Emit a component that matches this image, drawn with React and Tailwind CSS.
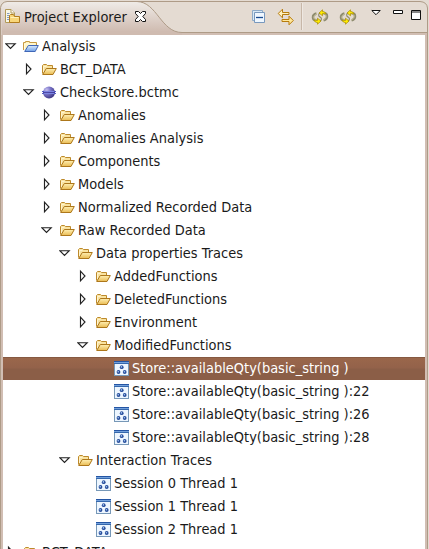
import React from "react";

const OpenFolder = () => (
  <svg width="16" height="16" viewBox="0 0 16 16">
    <defs>
      <linearGradient id="gold" x1="0" y1="0" x2="0" y2="1">
        <stop offset="0" stopColor="#fff0b4" />
        <stop offset="1" stopColor="#e9bb52" />
      </linearGradient>
    </defs>
    <path d="M1.5 12.5V4.5L2.5 3.5H5.5L6.5 4.5H11.5V7" fill="#f9e3a0" stroke="#bd8a2c" />
    <path d="M1.7 13.5L5.3 7.5H15.3L12 13.5Z" fill="url(#gold)" stroke="#ad771b" />
    <path d="M2.5 11V5.5H5.5" fill="none" stroke="#fff3cc" />
  </svg>
);

const ProjectFolder = () => (
  <svg width="16" height="16" viewBox="0 0 16 16">
    <defs>
      <linearGradient id="blue" x1="0" y1="0" x2="0" y2="1">
        <stop offset="0" stopColor="#dcecff" />
        <stop offset="1" stopColor="#6fa0e6" />
      </linearGradient>
    </defs>
    <path d="M.5 12V4.5H2.5V3.5H6.5V4.5H13.5V7" fill="#fff3bd" stroke="#c79a43" />
    <path d="M1.5 11V6H12" fill="none" stroke="#fffbe2" />
    <path d="M1.7 13.5L5.3 7.5H15.3L12.2 13.5Z" fill="url(#blue)" stroke="#3f66b7" />
  </svg>
);

const Sphere = () => (
  <svg width="16" height="16" viewBox="0 0 16 16">
    <defs>
      <radialGradient id="orb" cx=".3" cy=".28" r=".8">
        <stop offset="0" stopColor="#c4bff0" />
        <stop offset=".45" stopColor="#7670c4" />
        <stop offset="1" stopColor="#3a3380" />
      </radialGradient>
    </defs>
    <circle cx="8" cy="8.5" r="6" fill="url(#orb)" />
    <path d="M1 7.5H15M1 9.5H15" stroke="#5058c0" />
    <path d="M3 7.5H13M3 9.5H13" stroke="#8e9af0" strokeWidth=".7" />
    <path d="M2 8.5H14" stroke="#40389a" strokeWidth=".8" />
  </svg>
);

const Trace = () => (
  <svg width="16" height="16" viewBox="0 0 16 16">
    <rect x="1.5" y="1.5" width="14" height="14" fill="#edf6ff" stroke="#7798b7" />
    <path d="M1 1.5H16" stroke="#2455a4" />
    <path d="M1 2.5H16" stroke="#72a0db" />
    <path d="M1 3.5H16" stroke="#3567ac" />
    <g fill="#264c9b">
      <circle cx="8.7" cy="7.2" r="1.9" />
      <circle cx="5.5" cy="12" r="1.9" />
      <circle cx="11.7" cy="12" r="1.9" />
    </g>
    <g fill="#a5c8f2">
      <circle cx="8.4" cy="6.9" r=".8" />
      <circle cx="5.2" cy="11.7" r=".8" />
      <circle cx="11.4" cy="11.7" r=".8" />
    </g>
  </svg>
);

const Arrow = ({ state }) => (
  <svg width="12" height="14" viewBox="0 0 12 14" className="shrink-0">
    {state === "open" && <path d="M.8 4.7H10.2L5.5 9.4Z" fill="#fff" stroke="#222" strokeWidth="1.15" />}
    {state === "closed" && <path d="M3.5 2.2V11.8L8 7Z" fill="#fff" stroke="#222" strokeWidth="1.15" />}
  </svg>
);

const icons = { folder: OpenFolder, project: ProjectFolder, sphere: Sphere, trace: Trace };
const indents = ["pl-[2px]", "pl-[20px]", "pl-[38px]", "pl-[56px]", "pl-[74px]", "pl-[92px]"];

const rows = [
  [0, "open", "project", "Analysis"],
  [1, "closed", "folder", "BCT_DATA"],
  [1, "open", "sphere", "CheckStore.bctmc"],
  [2, "closed", "folder", "Anomalies"],
  [2, "closed", "folder", "Anomalies Analysis"],
  [2, "closed", "folder", "Components"],
  [2, "closed", "folder", "Models"],
  [2, "closed", "folder", "Normalized Recorded Data"],
  [2, "open", "folder", "Raw Recorded Data"],
  [3, "open", "folder", "Data properties Traces"],
  [4, "closed", "folder", "AddedFunctions"],
  [4, "closed", "folder", "DeletedFunctions"],
  [4, "closed", "folder", "Environment"],
  [4, "open", "folder", "ModifiedFunctions"],
  [5, "none", "trace", "Store::availableQty(basic_string )", true],
  [5, "none", "trace", "Store::availableQty(basic_string ):22"],
  [5, "none", "trace", "Store::availableQty(basic_string ):26"],
  [5, "none", "trace", "Store::availableQty(basic_string ):28"],
  [3, "open", "folder", "Interaction Traces"],
  [4, "none", "trace", "Session 0 Thread 1"],
  [4, "none", "trace", "Session 1 Thread 1"],
  [4, "none", "trace", "Session 2 Thread 1"],
  [0, "closed", "folder", "BCT_DATA"],
];

const Row = ({ row: [depth, state, icon, label, selected] }) => {
  const Icon = icons[icon];
  return (
    <div
      className={`flex h-[23px] shrink-0 items-center pb-px ${indents[depth]} ${
        selected
          ? "bg-[linear-gradient(#865941_0px,#865941_1px,#9a674b_1px,#93624a_11px,#8b5e47_12px,#8b5e47_100%)] text-white"
          : "text-[#1a1a1a]"
      }`}
    >
      <Arrow state={state} />
      <span className="ml-[6px] mr-[3px] shrink-0"><Icon /></span>
      <span className="origin-[0_17px] scale-y-[1.06] whitespace-pre pt-[2px]">{label}</span>
    </div>
  );
};

const Sync = () => (
  <svg width="18" height="18" viewBox="0 0 18 18">
    <path d="M5.5 12.5C1 12 .5 7 5.5 5.5M12.5 5C17 5.5 17.5 10.5 12.5 12.5" fill="none" stroke="#8f8c70" strokeWidth="2.4" />
    <path d="M5 12C2 11 2 7.5 6 5.8M13 5.5C16 7 16 10 12 12.2" fill="none" stroke="#cfc9a0" strokeWidth=".9" />
    <path d="M9.5 9.5C7 8.5 7 5.5 9.5 4.5M8.5 8.5C11 9.5 11 12 9 13.3" fill="none" stroke="#8f8c70" strokeWidth="1.2" />
    <path d="M8 5L11.5 1.8V3.5C13.5 3.5 14.5 4.5 15 6L11.5 5.5V7.8Z" fill="#ffec00" stroke="#a48700" strokeWidth=".7" />
    <path d="M10 13L6.5 16.2V14.5C4.5 14.5 3.5 13.5 3 12L6.5 12.5V10.2Z" fill="#ffec00" stroke="#a48700" strokeWidth=".7" />
  </svg>
);

const Header = () => (
  <header className="relative h-[35px] shrink-0">
    <svg className="absolute inset-0" width="429" height="35" viewBox="0 0 429 35">
      <defs>
        <linearGradient id="tab" x1="0" y1="0" x2="0" y2="1">
          <stop offset="0" stopColor="#efebe7" />
          <stop offset=".9" stopColor="#cfbbb0" />
        </linearGradient>
      </defs>
      <path d="M0 0H429V35H0Z" fill="#e4dbd2" />
      <path d="M1.5 35V7.5Q2.5 2.5 7.5 2H137C157 2 161 32.5 182 32.5H427V35Z" fill="url(#tab)" />
      <path d="M182 33H427V35H182Z" fill="#d1beb3" />
      <path d="M.5 35V7.5Q1.5 2 7 1.5H420Q427 2 427.5 8V35" fill="none" stroke="#ae9b87" />
      <path d="M137 1.5C157 2 161 32.5 182 32.5H427" fill="none" stroke="#ae9b87" />
    </svg>
    <div className="relative flex h-[33px] items-center pl-[4px]">
      <svg width="17" height="17" viewBox="0 0 17 17" className="shrink-0">
        <path d="M1.5 14.5V1.5H7L10.5 5V14.5Z" fill="#f8f7e7" stroke="#b29a58" />
        <path d="M7 1.5V5H10.5" fill="#fff" stroke="#b29a58" />
        <path d="M3 5.5H5.5M3 7.5H8M3 9.5H6M3 11.5H5" stroke="#8199c0" />
        <path d="M5.5 14.5V7.5L6.5 6.5H9.5L10.5 8.5H15.5V14.5Z" fill="#f8d679" stroke="#b27d1e" />
        <path d="M6.5 9.5H14.5" stroke="#fff1b6" />
      </svg>
      <span className="ml-[3px] w-[105px] origin-[0_18px] scale-y-[1.06] whitespace-pre pt-[3px] text-[#1a1a1a]">Project Explorer</span>
      <svg width="11" height="11" viewBox="0 0 11 11" className="ml-[6px] shrink-0">
        <path d="M.5.5H3.5L5.5 2.5L7.5.5H10.5V2.5L7.8 5.5L10.5 8.5V10.5H7.5L5.5 8.5L3.5 10.5H.5V8.5L3.2 5.5L.5 2.5Z" fill="#fff" stroke="#111" />
      </svg>
      <div className="ml-[105px] flex h-full items-center">
        <svg width="15" height="15" viewBox="0 0 15 15" className="mt-[2px]">
          <path d="M1.5.5H11.5V10.5H1.5Z" fill="#d9e9f5" stroke="#8eabc9" />
          <path d="M3.5 2.5H13.5V12.5H3.5Z" fill="#eff7ff" stroke="#7898bd" />
          <path d="M5 7.5H12" stroke="#194b91" strokeWidth="1.3" />
        </svg>
        <svg width="18" height="18" viewBox="0 0 18 18" className="ml-[11px]">
          <path d="M1.2 5.5L5.5 1.2V4.5H12V6.5H5.5V9.8Z" fill="#fff1bd" stroke="#b77b0b" />
          <path d="M16.3 12.5L12 8.2V11.5H5V13.5H12V16.8Z" fill="#ffe79a" stroke="#b77b0b" />
        </svg>
        <span className="ml-[6px] mt-[-1px] h-[27px] w-[2px] border-l border-r border-l-[#c7b7a8] border-r-[#eee8e2]" />
        <span className="ml-[8px]"><Sync /></span>
        <span className="ml-[10px]"><Sync /></span>
        <svg width="52" height="14" viewBox="0 0 52 14" className="mb-[1px] ml-[14px]">
          <path d="M.8 1.5H9.2L5 5.7Z" fill="#fff" stroke="#111" />
          <path d="M22.5 1.5H31.5V4.5H22.5Z" fill="#fff" stroke="#111" />
          <path d="M40.5 1.5H49.5V10.5H40.5Z" fill="#fff" stroke="#111" />
          <path d="M40 3H50" stroke="#111" />
        </svg>
      </div>
    </div>
  </header>
);

export default function App() {
  return (
    <div className="flex h-[549px] w-[429px] flex-col overflow-hidden bg-[#e4dbd2] font-['DejaVu_Sans','Liberation_Sans',sans-serif] text-[13px] leading-[22px]">
      <Header />
      <main className="mr-px flex min-h-0 flex-1 flex-col overflow-hidden border-x border-[#ae9b87] bg-[#d1beb3] pl-[2px] pr-[2px]">
        <div className="min-h-0 flex-1 overflow-hidden bg-white">
          {rows.map((row, i) => <Row key={i} row={row} />)}
        </div>
      </main>
    </div>
  );
}
